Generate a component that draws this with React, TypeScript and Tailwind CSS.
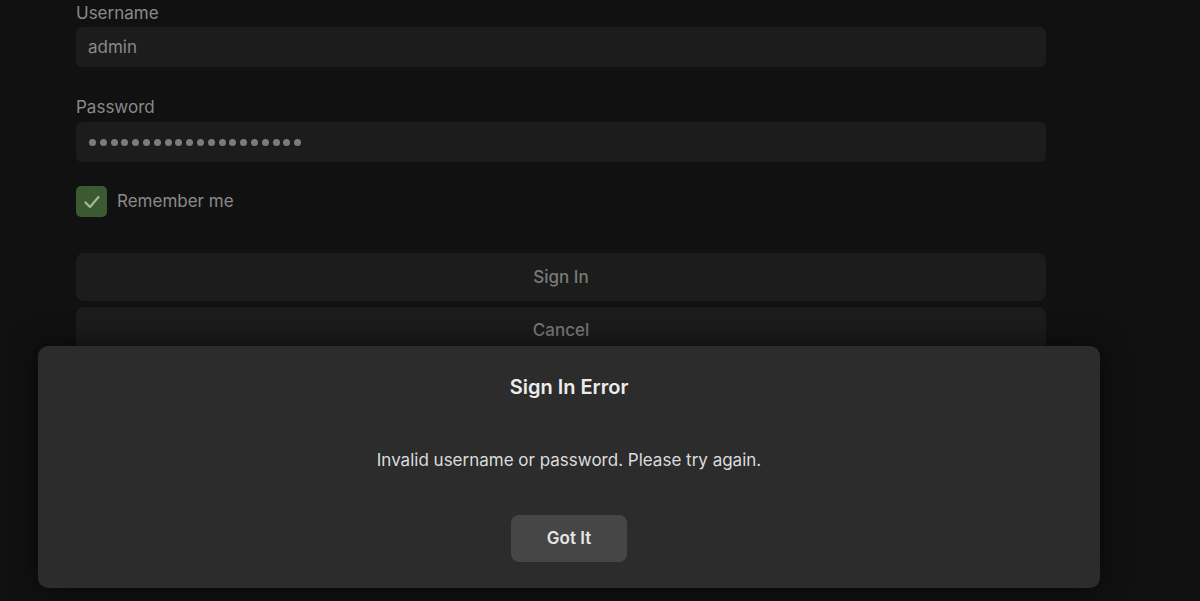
export default function App() {
  const dots = Array.from({ length: 20 });

  return (
    <div className="relative h-[601px] w-[1200px] overflow-hidden bg-[#111111] font-['Inter','Liberation_Sans',sans-serif]">
      <div className="ml-[76px] w-[970px] pt-[2px]">
        <label className="block text-[17px] leading-[22px] text-[#8a8a8a]">Username</label>
        <div className="mt-[3px] flex h-[40px] items-center rounded-[6px] bg-[#1c1c1c] px-[12px] pt-[2px] text-[17px] text-[#8a8a8a]">
          admin
        </div>

        <label className="mt-[29px] block text-[17px] leading-[22px] text-[#8a8a8a]">Password</label>
        <div className="mt-[4px] flex h-[40px] items-center gap-[3.8px] rounded-[6px] bg-[#1c1c1c] px-[13px]">
          {dots.map((_, i) => (
            <span key={i} className="h-[7px] w-[7px] rounded-full bg-[#7c7c7c]" />
          ))}
        </div>

        <div className="mt-[24px] flex items-center gap-[10px]">
          <div className="flex h-[31px] w-[31px] items-center justify-center rounded-[5px] bg-[#3b5a31]">
            <svg width="20" height="20" viewBox="0 0 20 20" fill="none">
              <path d="M3.5 10.5 L8 15 L16.5 5" stroke="#a7b8a0" strokeWidth="2.2" strokeLinecap="round" strokeLinejoin="round" />
            </svg>
          </div>
          <span className="text-[17px] text-[#8a8a8a]">Remember me</span>
        </div>

        <button className="mt-[36px] flex h-[48px] w-full items-center justify-center rounded-[8px] bg-[#1c1c1c] pt-[2px] text-[17px] font-medium text-[#7a7a7a]">
          Sign In
        </button>
        <button className="mt-[6px] flex h-[48px] w-full items-center justify-center rounded-[8px] bg-[#1c1c1c] text-[17px] font-medium text-[#7a7a7a]">
          Cancel
        </button>
      </div>

      <div className="absolute left-[38px] top-[346px] flex h-[242px] w-[1062px] flex-col items-center rounded-[10px] bg-[#2c2c2c] shadow-[0_0_30px_rgba(0,0,0,0.6)]">
        <h2 className="mt-[28px] text-[20px] font-semibold leading-[26px] text-[#ececec]">Sign In Error</h2>
        <p className="mt-[49px] text-[17px] leading-[22px] text-[#dcdcdc]">
          Invalid username or password. Please try again.
        </p>
        <button className="mt-[44px] flex h-[47px] w-[116px] items-center justify-center rounded-[8px] bg-[#464646] pt-[1px] text-[17px] font-semibold text-[#e6e6e6]">
          Got It
        </button>
      </div>
    </div>
  );
}
